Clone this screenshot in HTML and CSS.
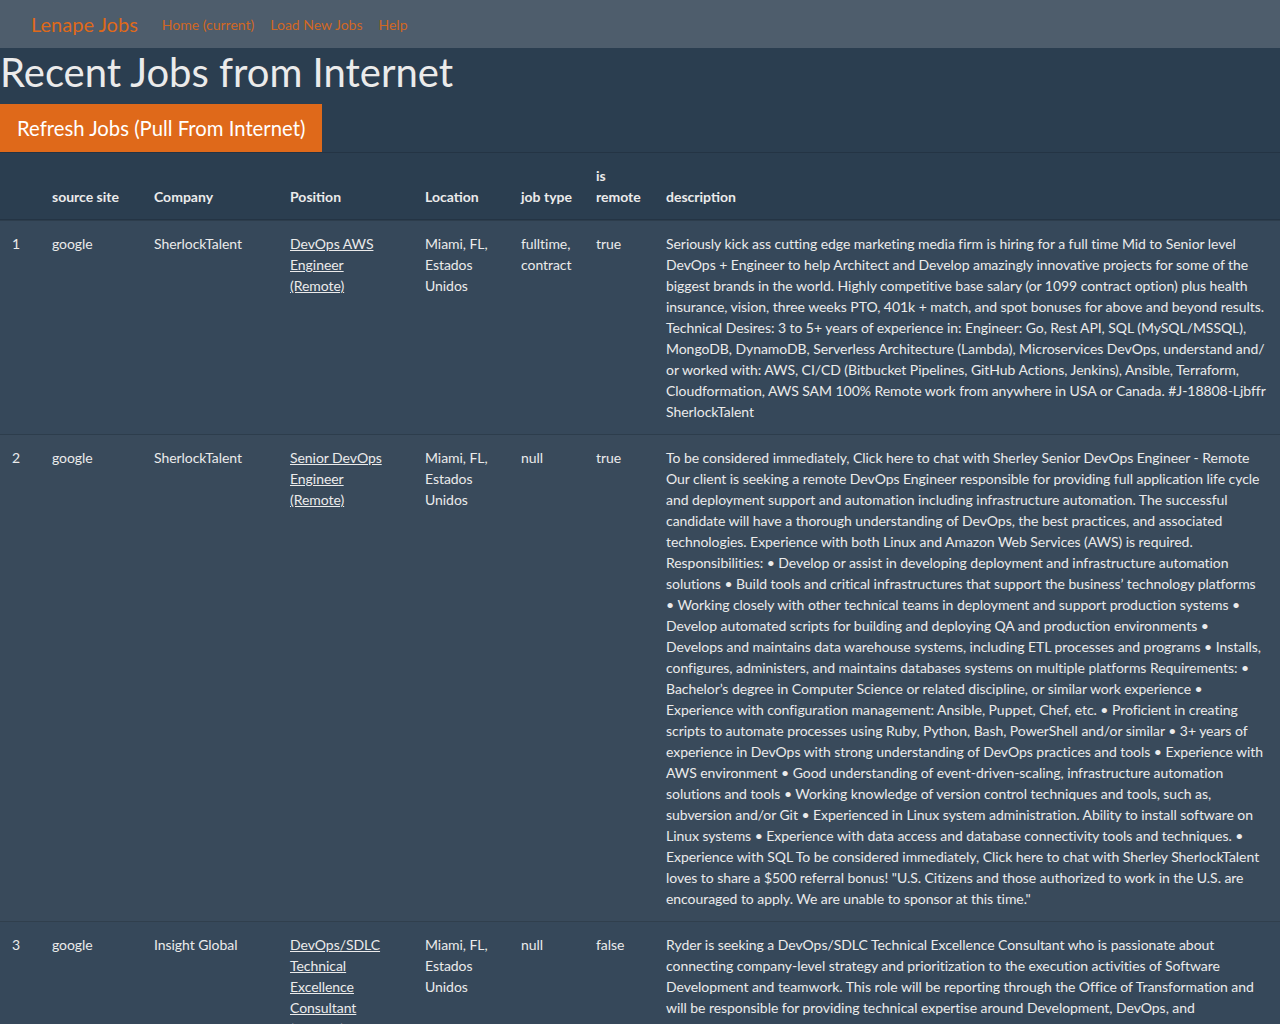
FILE: index.html
```html
<!DOCTYPE html>
<html lang="en">
<head>
    <meta charset="UTF-8">
    <meta name="viewport" content="width=device-width, initial-scale=1.0">
    <title>Lenape Jobs</title>
    <link rel="stylesheet" href="styles.css">
</head>
<body>
    <nav class="navbar">
        <a class="brand" href="#">Lenape Jobs</a>
        <ul class="nav">
            <li><a href="#">Home (current)</a></li>
            <li><a href="#">Load New Jobs</a></li>
            <li><a href="#">Help</a></li>
        </ul>
    </nav>
    <h1>Recent Jobs from Internet</h1>
    <button class="btn">Refresh Jobs (Pull From Internet)</button>
    <table class="jobs">
        <colgroup>
            <col class="c-num">
            <col class="c-site">
            <col class="c-company">
            <col class="c-position">
            <col class="c-location">
            <col class="c-type">
            <col class="c-remote">
            <col>
        </colgroup>
        <thead>
            <tr>
                <th></th>
                <th>source site</th>
                <th>Company</th>
                <th>Position</th>
                <th>Location</th>
                <th>job type</th>
                <th>is remote</th>
                <th>description</th>
            </tr>
        </thead>
        <tbody>
            <tr>
                <td>1</td>
                <td>google</td>
                <td>SherlockTalent</td>
                <td class="pos"><a href="#">DevOps AWS Engineer (Remote)</a></td>
                <td>Miami, FL, Estados Unidos</td>
                <td>fulltime, contract</td>
                <td>true</td>
                <td>Seriously kick ass cutting edge marketing media firm is hiring for a full time Mid to Senior level DevOps + Engineer to help Architect and Develop amazingly innovative projects for some of the biggest brands in the world. Highly competitive base salary (or 1099 contract option) plus health insurance, vision, three weeks PTO, 401k + match, and spot bonuses for above and beyond results. Technical Desires: 3 to 5+ years of experience in: Engineer: Go, Rest API, SQL (MySQL/MSSQL), MongoDB, DynamoDB, Serverless Architecture (Lambda), Microservices DevOps, understand and/<wbr>or worked with: AWS, CI/CD (Bitbucket Pipelines, GitHub Actions, Jenkins), Ansible, Terraform, Cloudformation, AWS SAM 100% Remote work from anywhere in USA or Canada. #J-18808-Ljbffr SherlockTalent</td>
            </tr>
            <tr>
                <td>2</td>
                <td>google</td>
                <td>SherlockTalent</td>
                <td class="pos"><a href="#">Senior DevOps Engineer (Remote)</a></td>
                <td>Miami, FL, Estados Unidos</td>
                <td>null</td>
                <td>true</td>
                <td>To be considered immediately, Click here to chat with Sherley Senior DevOps Engineer - Remote Our client is seeking a remote DevOps Engineer responsible for providing full application life cycle and deployment support and automation including infrastructure automation. The successful candidate will have a thorough understanding of DevOps, the best practices, and associated technologies. Experience with both Linux and Amazon Web Services (AWS) is required. Responsibilities: • Develop or assist in developing deployment and infrastructure automation solutions • Build tools and critical infrastructures that support the business’ technology platforms •&nbsp;Working closely with other technical teams in deployment and support production systems • Develop automated scripts for building and deploying QA and production environments • Develops and maintains data warehouse systems, including ETL processes and programs • Installs, configures, administers, and maintains databases systems on multiple platforms Requirements: • Bachelor’s degree in Computer Science or related discipline, or similar work experience • Experience with configuration management: Ansible, Puppet, Chef, etc. • Proficient in creating scripts to automate processes using Ruby, Python, Bash, PowerShell and/or similar • 3+ years of experience in DevOps with strong understanding of DevOps practices and tools • Experience with AWS environment • Good understanding of event-driven-scaling, infrastructure automation solutions and tools • Working knowledge of version control techniques and tools, such as, subversion and/or Git • Experienced in Linux system administration. Ability to install software on Linux systems • Experience with data access and database connectivity tools and techniques. • Experience with SQL To be considered immediately, Click here to chat with Sherley SherlockTalent loves to share a $500 referral bonus! "U.S. Citizens and those authorized to work in the U.S. are encouraged to apply. We are unable to sponsor at this time."</td>
            </tr>
            <tr>
                <td>3</td>
                <td>google</td>
                <td>Insight Global</td>
                <td class="pos"><a href="#">DevOps/SDLC Technical Excellence Consultant (Remote)</a></td>
                <td>Miami, FL, Estados Unidos</td>
                <td>null</td>
                <td>false</td>
                <td>Ryder is seeking a DevOps/SDLC Technical Excellence Consultant who is passionate about connecting company-level strategy and prioritization to the execution activities of Software Development and teamwork. This role will be reporting through the Office of Transformation and will be responsible for providing technical expertise around Development, DevOps, and Infrastructure Engineering practices across the organization.</td>
            </tr>
        </tbody>
    </table>
</body>
</html>
```

FILE: styles.css
```css
*{
    box-sizing: border-box;
}
body{
    margin:0;
    background: #2b3e50;
    color: #ebebeb;
    font-family: Lato, "Noto Sans", sans-serif;
    font-size: 15px;
    line-height: 1.5;
}
a{
    color: #ebebeb;
}
.navbar{
    display: flex;
    align-items: center;
    height: 48px;
    padding: 0 31px;
    background: #4e5d6c;
}
.brand{
    color: #df691a;
    font-size: 20px;
    text-decoration: none;
    margin-right: 16px;
}
.nav{
    display: flex;
    list-style: none;
    margin: 0;
    padding: 0;
}
.nav a{
    display: block;
    padding: 8px;
    color: #df691a;
    font-size: 14px;
    text-decoration: none;
    opacity: 0.9;
}
h1{
    margin: 0 0 8px;
    font-size: 40px;
    font-weight: 400;
    line-height: 1.2;
}
.btn{
    display: block;
    border: 1px solid #df691a;
    border-radius: 0;
    background: #df691a;
    color: #fff;
    font-family: inherit;
    font-size: 20.3px;
    line-height: 1.5;
    padding: 8px 16px;
    height: 48px;
}
.jobs{
    width: 100%;
    table-layout: fixed;
    border-collapse: collapse;
    font-size: 14px;
}
.c-num{ width: 40px; }
.c-site{ width: 102px; }
.c-company{ width: 136px; }
.c-position{ width: 135px; }
.c-location{ width: 96px; }
.c-type{ width: 75px; }
.c-remote{ width: 70px; }
.jobs th,
.jobs td{
    padding: 12px;
    text-align: left;
    vertical-align: top;
    border-top: 1px solid rgba(0,0,0,0.15);
}
.jobs td{
    letter-spacing: -0.05px;
}
.jobs td.pos{
    padding-right: 16px;
}
.jobs th{
    vertical-align: bottom;
    font-weight: 700;
    border-bottom: 2px solid rgba(0,0,0,0.15);
}
.jobs tbody tr{
    background: #394a5b;
}
.jobs tbody tr:nth-child(odd){
    background: #36485a;
}
```
